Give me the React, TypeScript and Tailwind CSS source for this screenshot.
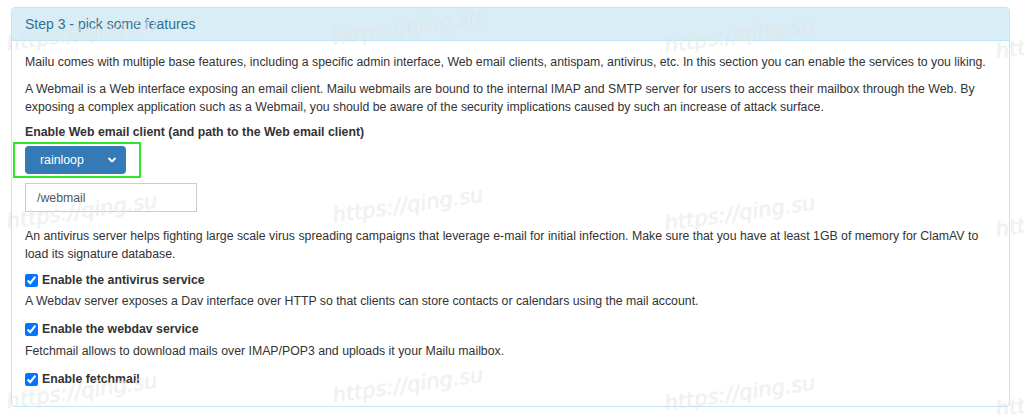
import React from 'react';

const marks = [
  [6, 24], [332, 18], [664, 26], [995, 32],
  [6, 202], [332, 196], [664, 204], [995, 210],
  [6, 382], [332, 376], [664, 384], [995, 390],
];

const Watermarks: React.FC = () => (
  <>
    {marks.map(([x, y], i) => (
      <span
        key={i}
        className="absolute pointer-events-none select-none italic text-[21px] text-white/60 -rotate-[8deg] whitespace-nowrap [font-family:'DejaVu_Sans',sans-serif] [text-shadow:0_0_1px_rgba(0,0,0,0.14)]"
        style={{ left: x, top: y }}
      >
        https://qing.su
      </span>
    ))}
  </>
);

const Check: React.FC<{ label: string }> = ({ label }) => (
  <label className="flex items-center gap-[4px] font-bold h-[18px]">
    <input type="checkbox" defaultChecked className="w-[13px] h-[13px] m-0 accent-[#0075ff]" />
    <span>{label}</span>
  </label>
);

export default function App() {
  return (
    <div className="relative w-[1024px] h-[415px] bg-white overflow-hidden pt-[7px] pl-[11px] text-[#333] text-[12.3px] leading-[18px] [font-family:'Liberation_Sans',Arial,sans-serif]">
      <div className="w-[999px] h-[400px] border border-[#bce8f1] rounded-[4px] overflow-hidden">
        <div className="h-[33px] bg-[#d9edf7] border-b border-[#bce8f1] px-[13px] flex items-center text-[#31708f] text-[14px]">
          Step 3 - pick some features
        </div>
        <div className="px-[13px] pt-[12px]">
          <p className="mb-[9px]">
            Mailu comes with multiple base features, including a specific admin interface, Web email clients, antispam, antivirus, etc. In this section you can enable the services to you liking.
          </p>
          <p className="mb-[7px] pr-[10px]">
            A Webmail is a Web interface exposing an email client. Mailu webmails are bound to the internal IMAP and SMTP server for users to access their mailbox through the Web. By exposing a complex application such as a Webmail, you should be aware of the security implications caused by such an increase of attack surface.
          </p>
          <div className="font-bold">Enable Web email client (and path to the Web email client)</div>
          <div className="-ml-[12px] mt-[1px] w-[128px] h-[36px] border-2 border-[#2ee62e] flex items-center pl-[10px]">
            <div className="w-[101px] h-[28px] bg-[#337ab7] rounded-[4px] flex items-center justify-between pl-[15px] pr-[9px] text-white">
              <span>rainloop</span>
              <svg width="10" height="10" viewBox="0 0 10 10" fill="none" stroke="white" strokeWidth="1.8" strokeLinecap="round" strokeLinejoin="round">
                <path d="M2 3.5 L5 6.5 L8 3.5" />
              </svg>
            </div>
          </div>
          <div className="mt-[5px] w-[172px] h-[29px] border border-[#ccc] flex items-center px-[11px] text-[#555]">
            /webmail
          </div>
          <p className="mt-[15px] mb-[8px] pr-[10px]">
            An antivirus server helps fighting large scale virus spreading campaigns that leverage e-mail for initial infection. Make sure that you have at least 1GB of memory for ClamAV to load its signature database.
          </p>
          <Check label="Enable the antivirus service" />
          <p className="mt-[3px] mb-[10px]">
            A Webdav server exposes a Dav interface over HTTP so that clients can store contacts or calendars using the mail account.
          </p>
          <Check label="Enable the webdav service" />
          <p className="mt-[4px] mb-[10px]">
            Fetchmail allows to download mails over IMAP/POP3 and uploads it your Mailu mailbox.
          </p>
          <Check label="Enable fetchmail" />
        </div>
      </div>
      <Watermarks />
    </div>
  );
}
